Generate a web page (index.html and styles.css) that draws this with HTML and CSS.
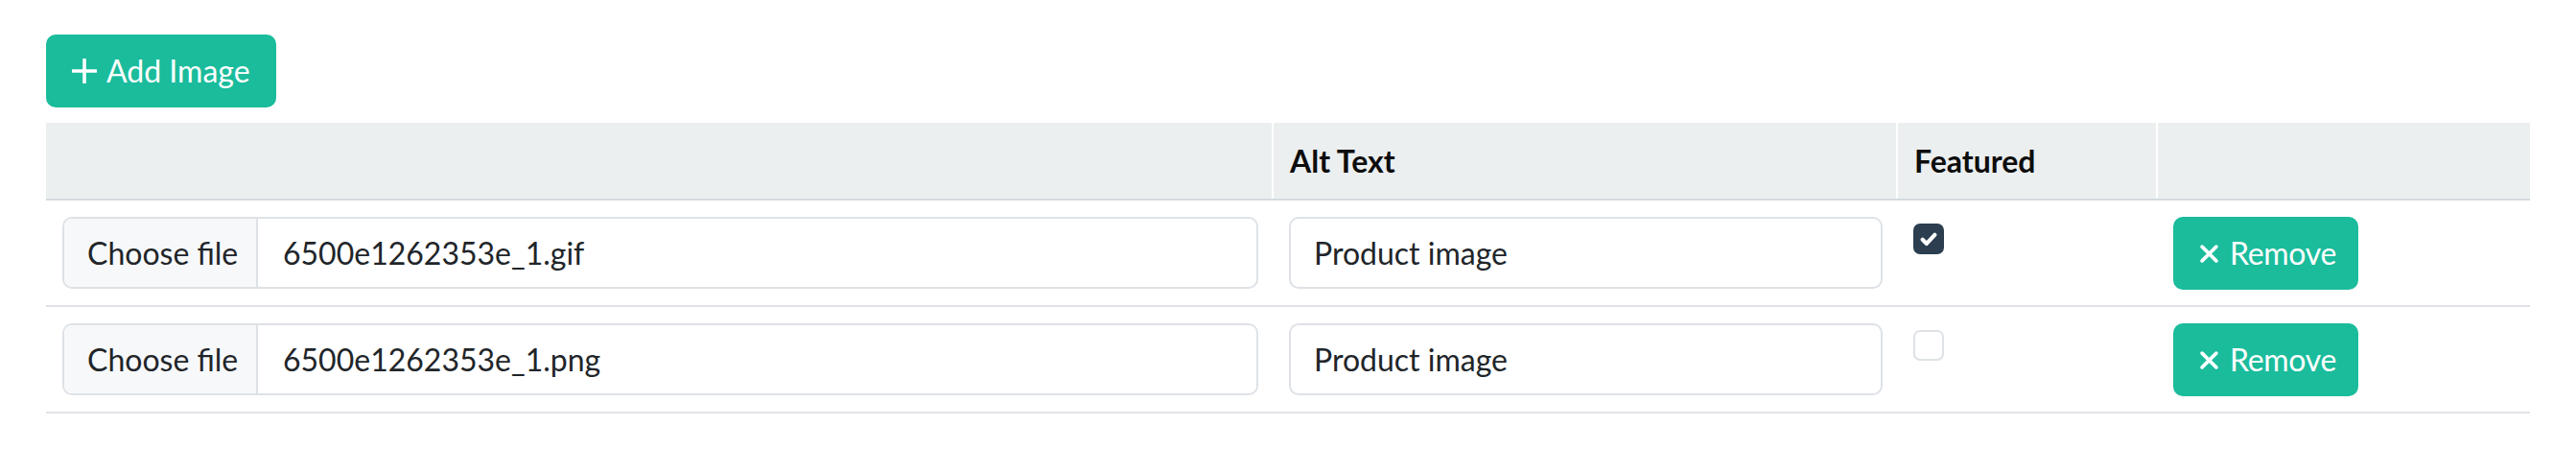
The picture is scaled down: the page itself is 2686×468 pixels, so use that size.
FILE: index.html
```html
<!DOCTYPE html>
<html lang="en">
<head>
<meta charset="utf-8">
<title>Images</title>
<link rel="stylesheet" href="styles.css">
</head>
<body>
<div class="page">
  <button class="btn btn-add" type="button">
    <svg class="icon-plus" viewBox="0 0 26 26" aria-hidden="true"><path d="M13 1v24M1 13h24" stroke="#fff" stroke-width="3.6" stroke-linecap="round" fill="none"/></svg>
    <span>Add Image</span>
  </button>
  <table class="images">
    <colgroup>
      <col class="c-file">
      <col class="c-alt">
      <col class="c-feat">
      <col class="c-act">
    </colgroup>
    <thead>
      <tr>
        <th></th>
        <th>Alt Text</th>
        <th>Featured</th>
        <th></th>
      </tr>
    </thead>
    <tbody>
      <tr>
        <td>
          <div class="file-input">
            <span class="file-btn">Choose file</span>
            <span class="file-name">6500e1262353e_1.gif</span>
          </div>
        </td>
        <td><div class="text-input">Product image</div></td>
        <td>
          <span class="check checked">
            <svg viewBox="0 0 20 20" aria-hidden="true"><path d="M5.5 10.5l3 3l6-6.5" stroke="#fff" stroke-width="3" stroke-linecap="round" stroke-linejoin="round" fill="none"/></svg>
          </span>
        </td>
        <td>
          <button class="btn btn-remove" type="button">
            <svg class="icon-x" viewBox="0 0 18 18" aria-hidden="true"><path d="M2 2l14 14M16 2L2 16" stroke="#fff" stroke-width="3.4" stroke-linecap="round" fill="none"/></svg>
            <span>Remove</span>
          </button>
        </td>
      </tr>
      <tr>
        <td>
          <div class="file-input">
            <span class="file-btn">Choose file</span>
            <span class="file-name">6500e1262353e_1.png</span>
          </div>
        </td>
        <td><div class="text-input">Product image</div></td>
        <td><span class="check"></span></td>
        <td>
          <button class="btn btn-remove" type="button">
            <svg class="icon-x" viewBox="0 0 18 18" aria-hidden="true"><path d="M2 2l14 14M16 2L2 16" stroke="#fff" stroke-width="3.4" stroke-linecap="round" fill="none"/></svg>
            <span>Remove</span>
          </button>
        </td>
      </tr>
    </tbody>
  </table>
</div>
</body>
</html>
```
FILE: styles.css
```css
html, body {
  margin: 0;
  padding: 0;
  background: #ffffff;
}

body {
  font-family: "Lato", "Liberation Sans", sans-serif;
  font-size: 32px;
  color: #212529;
}

.page {
  padding: 36px 48px 0 48px;
}

.btn {
  display: inline-flex;
  align-items: center;
  height: 76px;
  border: none;
  border-radius: 10px;
  background: #1abc9c;
  color: #ffffff;
  font-family: inherit;
  font-size: 32px;
  line-height: 1;
  cursor: pointer;
}

.btn-add {
  padding: 0 27px;
  gap: 10px;
}

.icon-plus {
  width: 26px;
  height: 26px;
  display: block;
}

.btn-remove {
  height: 76px;
  padding: 0 23px 0 28px;
  gap: 12px;
  letter-spacing: -0.3px;
}

.icon-x {
  width: 19px;
  height: 19px;
  display: block;
}

.images {
  margin-top: 16px;
  width: 2590px;
  border-collapse: collapse;
  table-layout: fixed;
}

.c-file { width: 1279px; }
.c-alt { width: 651px; }
.c-feat { width: 271px; }
.c-act { width: 389px; }

.images th {
  background: #ebeff0;
  text-align: left;
  font-weight: 700;
  color: #0d0d0d;
  padding: 16px 17px;
  line-height: 47px;
  height: 47px;
  border-bottom: 2px solid #d3dadf;
  border-left: 2px solid #ffffff;
}

.images th:first-child {
  border-left: none;
}

.images td {
  padding: 17px 15px 16px 17px;
  vertical-align: top;
  border-bottom: 2px solid #dfe3e7;
}

.file-input {
  display: flex;
  height: 75px;
  box-sizing: border-box;
  border: 2px solid #dee2e6;
  border-radius: 10px;
  overflow: hidden;
  align-items: stretch;
}

.file-btn {
  display: flex;
  align-items: center;
  width: 202px;
  box-sizing: border-box;
  padding-left: 24px;
  background: #f7f8fa;
  border-right: 2px solid #dee2e6;
  color: #212529;
}

.file-name {
  display: flex;
  align-items: center;
  padding-left: 26px;
  color: #212529;
}

.text-input {
  display: flex;
  align-items: center;
  height: 75px;
  box-sizing: border-box;
  border: 2px solid #dee2e6;
  border-radius: 10px;
  padding-left: 24px;
  color: #212529;
}

.check {
  display: block;
  width: 32px;
  height: 32px;
  box-sizing: border-box;
  margin-top: 7px;
  border: 2px solid #dee2e6;
  border-radius: 7px;
  background: #ffffff;
}

.check.checked {
  background: #2c3e50;
  border-color: #2c3e50;
}

.check svg {
  display: block;
  width: 28px;
  height: 28px;
}
```
